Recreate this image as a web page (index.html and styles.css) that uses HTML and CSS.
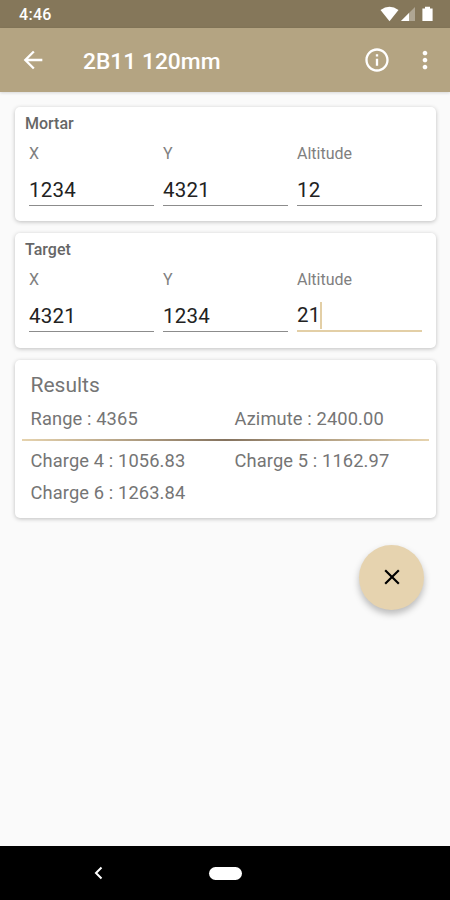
FILE: index.html
```html
<!DOCTYPE html>
<html lang="en">
  <head>
    <meta charset="UTF-8" />
    <meta name="viewport" content="width=device-width, initial-scale=1.0" />
    <title>2B11 120mm</title>
    <link rel="stylesheet" href="styles.css">
  </head>
  <body>
    <div class="status-bar">
      <span class="clock">4:46</span>
      <svg class="status-icons" width="54" height="16" viewBox="0 0 54 16">
        <path d="M0.5 4 Q9.5 -2.6 18.5 4 L9.5 15.2 Z" fill="#fff" />
        <path d="M35 1 V15 H21 Z" fill="#fff" fill-opacity="0.35" />
        <path d="M29 7 V15 H21 Z" fill="#fff" />
        <path d="M42.4 2.6 H45 V0.8 H50 V2.6 H52.6 V15 H42.4 Z" fill="#fff" />
      </svg>
    </div>

    <header class="toolbar">
      <svg class="back" width="28" height="28" viewBox="0 0 24 24">
        <path d="M20 11H7.83l5.59-5.59L12 4l-8 8 8 8 1.41-1.41L7.83 13H20v-2z" />
      </svg>
      <h1>2B11 120mm</h1>
      <svg class="info" width="28" height="28" viewBox="0 0 24 24">
        <path d="M11 7h2v2h-2zm0 4h2v6h-2zm1-9C6.48 2 2 6.48 2 12s4.48 10 10 10 10-4.48 10-10S17.52 2 12 2zm0 18c-4.41 0-8-3.59-8-8s3.59-8 8-8 8 3.59 8 8-3.59 8-8 8z" />
      </svg>
      <svg class="more" width="28" height="28" viewBox="0 0 24 24">
        <path d="M12 8c1.1 0 2-.9 2-2s-.9-2-2-2-2 .9-2 2 .9 2 2 2zm0 2c-1.1 0-2 .9-2 2s.9 2 2 2 2-.9 2-2-.9-2-2-2zm0 6c-1.1 0-2 .9-2 2s.9 2 2 2 2-.9 2-2-.9-2-2-2z" />
      </svg>
    </header>

    <main class="content">
      <section class="card position">
        <h2>Mortar</h2>
        <div class="fields">
          <div class="field">
            <div class="label">X</div>
            <div class="value">1234</div>
          </div>
          <div class="field">
            <div class="label">Y</div>
            <div class="value">4321</div>
          </div>
          <div class="field">
            <div class="label">Altitude</div>
            <div class="value">12</div>
          </div>
        </div>
      </section>

      <section class="card position">
        <h2>Target</h2>
        <div class="fields">
          <div class="field">
            <div class="label">X</div>
            <div class="value">4321</div>
          </div>
          <div class="field">
            <div class="label">Y</div>
            <div class="value">1234</div>
          </div>
          <div class="field focused">
            <div class="label">Altitude</div>
            <div class="value">21<span class="caret"></span></div>
          </div>
        </div>
      </section>

      <section class="card results">
        <h2>Results</h2>
        <div class="row">
          <span>Range : 4365</span>
          <span>Azimute : 2400.00</span>
        </div>
        <div class="divider"></div>
        <div class="row">
          <span>Charge 4 : 1056.83</span>
          <span>Charge 5 : 1162.97</span>
          <span>Charge 6 : 1263.84</span>
        </div>
      </section>

      <div class="fab">
        <svg width="26" height="26" viewBox="0 0 24 24">
          <path d="M19 6.41L17.59 5 12 10.59 6.41 5 5 6.41 10.59 12 5 17.59 6.41 19 12 13.41 17.59 19 19 17.59 13.41 12z" />
        </svg>
      </div>
    </main>

    <nav class="nav-bar">
      <svg class="nav-back" width="10" height="14" viewBox="0 0 10 14">
        <path d="M7.5 1.5 L2 7 L7.5 12.5" fill="none" stroke="#fff" stroke-width="2" />
      </svg>
      <div class="nav-home"></div>
    </nav>
  </body>
</html>
```

FILE: styles.css
```css
* {
  margin: 0;
  padding: 0;
  box-sizing: border-box;
}

body {
  display: flex;
  flex-direction: column;
  height: 100vh;
  background: #fafafa;
  font-family: Roboto, sans-serif;
  color: #757575;
  overflow: hidden;
}

.status-bar {
  display: flex;
  align-items: center;
  justify-content: space-between;
  height: 28px;
  padding: 0 16px 0 19px;
  background: #85775a;
  color: #fff;
}

.clock {
  font-size: 16px;
  font-weight: 500;
  letter-spacing: 0.3px;
}

.toolbar {
  display: flex;
  align-items: center;
  height: 64px;
  padding: 0 11px 0 19px;
  background: #b4a482;
  color: #fff;
  box-shadow: 0 1px 3px rgba(0, 0, 0, 0.14);
}

.toolbar svg {
  fill: #fff;
}

.toolbar h1 {
  flex: 1;
  margin-left: 36px;
  padding-top: 2px;
  font-size: 22.8px;
  font-weight: 500;
}

.toolbar .info {
  margin-right: 20px;
}

.content {
  flex: 1;
  display: flex;
  flex-direction: column;
  gap: 12px;
  padding: 15px 14px 0 15px;
}

.card {
  background: #fff;
  border-radius: 5px;
  box-shadow: 0 1px 4px rgba(0, 0, 0, 0.24);
}

.position {
  height: 114.4px;
  padding: 7px 14px 0;
}

.position h2 {
  margin-left: -4px;
  font-size: 16px;
  line-height: 20px;
  font-weight: 500;
  color: #666;
}

.fields {
  display: flex;
  gap: 9px;
  margin-top: 9px;
}

.field {
  flex: 1;
}

.label {
  font-size: 16px;
  line-height: 21px;
  color: #808080;
}

.value {
  display: flex;
  align-items: center;
  height: 42px;
  padding-top: 10px;
  border-bottom: 1px solid #8c8c8c;
  font-size: 20.5px;
  letter-spacing: 0.2px;
  color: #222;
}

.focused .value {
  border-bottom: 2px solid #e3cfa6;
}

.caret {
  width: 2px;
  height: 27px;
  background: #e3cfa6;
}

.results {
  height: 158px;
  padding: 12px 7px 0;
}

.results h2 {
  margin-bottom: 5px;
  padding-left: 8.5px;
  font-size: 21px;
  line-height: 26px;
  font-weight: 400;
}

.row {
  display: grid;
  grid-template-columns: 204px 1fr;
  padding-left: 8.5px;
  font-size: 18.3px;
  line-height: 32px;
  letter-spacing: 0.12px;
}

.divider {
  height: 2px;
  margin: 4px 0;
  background: linear-gradient(to right, #e6d3ae, #85735f, #e6d3ae);
}

.fab {
  display: flex;
  align-items: center;
  justify-content: center;
  align-self: flex-end;
  width: 65px;
  height: 65px;
  margin: 15px 12px 0 0;
  border-radius: 50%;
  background: #e6d3af;
  box-shadow: 0 4px 7px rgba(0, 0, 0, 0.26);
}

.nav-bar {
  display: flex;
  align-items: center;
  height: 54px;
  padding-left: 94px;
  background: #000;
}

.nav-home {
  width: 33px;
  height: 13px;
  margin-left: 105px;
  border-radius: 7px;
  background: #fff;
}
```
